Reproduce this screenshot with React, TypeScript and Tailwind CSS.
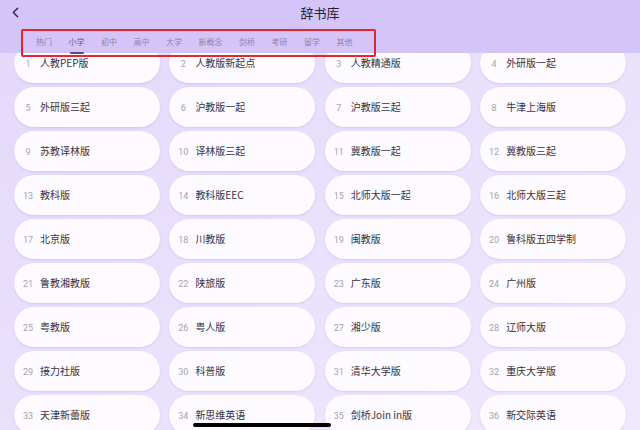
import { ChevronLeft } from "lucide-react";

const tabs = ["热门", "小学", "初中", "高中", "大学", "新概念", "剑桥", "考研", "留学", "其他"];

const books = [
  "人教PEP版", "人教版新起点", "人教精通版", "外研版一起",
  "外研版三起", "沪教版一起", "沪教版三起", "牛津上海版",
  "苏教译林版", "译林版三起", "冀教版一起", "冀教版三起",
  "教科版", "教科版EEC", "北师大版一起", "北师大版三起",
  "北京版", "川教版", "闽教版", "鲁科版五四学制",
  "鲁教湘教版", "陕旅版", "广东版", "广州版",
  "粤教版", "粤人版", "湘少版", "辽师大版",
  "接力社版", "科普版", "清华大学版", "重庆大学版",
  "天津新蕾版", "新思维英语", "剑桥Join in版", "新交际英语",
];

const font = "font-['Noto_Sans_CJK_SC','Noto_Sans',sans-serif]";

export default function App() {
  return (
    <div
      className={`relative h-[430px] w-[640px] overflow-hidden bg-gradient-to-br from-[#e4d8fb] to-[#efe9fd] ${font}`}
    >
      {/* book list, scrolled so the first row sits under the header */}
      <div className="grid grid-cols-4 gap-x-[9.5px] gap-y-[4px] px-[14px] pt-[43px]">
        {books.map((name, i) => (
          <div
            key={name}
            className="flex h-[40px] items-center rounded-full bg-[#fdfbff] pl-[6px] shadow-[0_1px_2px_rgba(120,90,170,0.18)]"
          >
            <div className="flex items-baseline">
              <span className="w-[16px] text-center font-['Roboto',sans-serif] text-[9px] text-[#a7a1ae]">
                {i + 1}
              </span>
              <span className="ml-[4px] text-[10px] text-[#38333f]">{name}</span>
            </div>
          </div>
        ))}
      </div>

      {/* header */}
      <div className="absolute inset-x-0 top-0 h-[53px] bg-[#d4c4f7]">
        <div className="relative flex h-[25px] items-center justify-center">
          <ChevronLeft className="absolute left-[7px] top-[4px] h-[17px] w-[17px] text-[#2b2733]" strokeWidth={2} />
          <span className="text-[13px] text-[#26222c]">辞书库</span>
        </div>
        <div className="flex gap-[16.5px] pl-[36px] pt-[11px]">
          {tabs.map((t) => (
            <div key={t} className="relative flex flex-col items-center">
              <span className={`text-[8px] leading-[12px] ${t === "小学" ? "text-[#6a6186]" : "text-[#8d84a6]"}`}>
                {t}
              </span>
              {t === "小学" && <div className="mt-[4px] h-[2px] w-[14px] rounded-full bg-[#5b5177]" />}
            </div>
          ))}
        </div>
      </div>

      {/* annotation box */}
      <div className="absolute left-[21px] top-[29px] h-[28px] w-[355px] rounded-[2px] border-2 border-[#e3262c]" />

      {/* home indicator */}
      <div className="absolute bottom-[3px] left-[193px] h-[4px] w-[138px] rounded-full bg-black" />
    </div>
  );
}
